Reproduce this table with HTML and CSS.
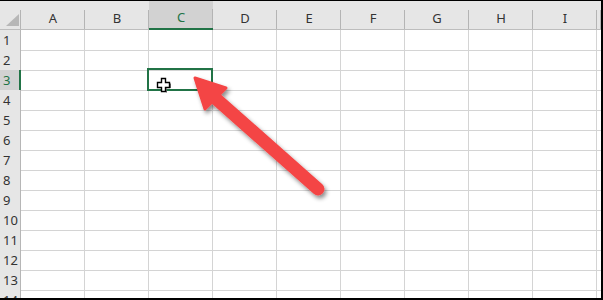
FILE: index.html
```html
<!DOCTYPE html>
<html lang="en">
<head>
    <meta charset="UTF-8">
    <title>Sheet1</title>
    <link rel="stylesheet" href="styles.css">
</head>
<body>
    <div class="sheet">
        <!-- column headers -->
        <div class="row head">
            <div class="corner"><span class="tri"></span></div>
            <div class="ch">A</div>
            <div class="ch">B</div>
            <div class="ch sel">C</div>
            <div class="ch">D</div>
            <div class="ch">E</div>
            <div class="ch">F</div>
            <div class="ch">G</div>
            <div class="ch">H</div>
            <div class="ch">I</div>
            <div class="ch"></div>
        </div>

        <div class="row"><div class="rh">1</div><div></div><div></div><div></div><div></div><div></div><div></div><div></div><div></div><div></div><div></div></div>
        <div class="row"><div class="rh">2</div><div></div><div></div><div></div><div></div><div></div><div></div><div></div><div></div><div></div><div></div></div>
        <div class="row"><div class="rh sel">3</div><div></div><div></div><div class="active"><span class="cursor"><svg width="16" height="17" viewBox="0 0 16 17"><path d="M5.5 1.5h4v4h4v5h-4v4h-4v-4h-4v-5h4z" fill="#fff" stroke="#000" stroke-width="1.4" stroke-linejoin="miter"/><path d="M10.5 11.5v4M14.5 6.5v4.5" stroke="#555" stroke-width="1"/></svg></span></div><div></div><div></div><div></div><div></div><div></div><div></div><div></div></div>
        <div class="row"><div class="rh">4</div><div></div><div></div><div></div><div></div><div></div><div></div><div></div><div></div><div></div><div></div></div>
        <div class="row"><div class="rh">5</div><div></div><div></div><div></div><div></div><div></div><div></div><div></div><div></div><div></div><div></div></div>
        <div class="row"><div class="rh">6</div><div></div><div></div><div></div><div></div><div></div><div></div><div></div><div></div><div></div><div></div></div>
        <div class="row"><div class="rh">7</div><div></div><div></div><div></div><div></div><div></div><div></div><div></div><div></div><div></div><div></div></div>
        <div class="row"><div class="rh">8</div><div></div><div></div><div></div><div></div><div></div><div></div><div></div><div></div><div></div><div></div></div>
        <div class="row"><div class="rh">9</div><div></div><div></div><div></div><div></div><div></div><div></div><div></div><div></div><div></div><div></div></div>
        <div class="row"><div class="rh">10</div><div></div><div></div><div></div><div></div><div></div><div></div><div></div><div></div><div></div><div></div></div>
        <div class="row"><div class="rh">11</div><div></div><div></div><div></div><div></div><div></div><div></div><div></div><div></div><div></div><div></div></div>
        <div class="row"><div class="rh">12</div><div></div><div></div><div></div><div></div><div></div><div></div><div></div><div></div><div></div><div></div></div>
        <div class="row"><div class="rh">13</div><div></div><div></div><div></div><div></div><div></div><div></div><div></div><div></div><div></div><div></div></div>
        <div class="row"><div class="rh">14</div><div></div><div></div><div></div><div></div><div></div><div></div><div></div><div></div><div></div><div></div></div>

        <!-- red callout arrow pointing at the active cell -->
        <svg class="arrow" width="603" height="300" viewBox="0 0 603 300">
            <defs>
                <filter id="shadow" x="-20%" y="-20%" width="140%" height="140%">
                    <feDropShadow dx="2" dy="3" stdDeviation="2" flood-color="#000" flood-opacity="0.45"/>
                </filter>
            </defs>
            <g filter="url(#shadow)" fill="#f44545" stroke="#f44545">
                <line x1="318" y1="189" x2="214" y2="97" stroke-width="13" stroke-linecap="round"/>
                <path d="M195 78 L226 88 L205 109 Z" stroke-width="3" stroke-linejoin="round"/>
            </g>
        </svg>
    </div>
</body>
</html>
```

FILE: styles.css
```css
body {
    margin: 0;
    background-color: #fff;
    font-family: "Noto Sans", "Open Sans", sans-serif;
}

.sheet {
    position: relative;
    width: 603px;
    height: 300px;
    box-sizing: border-box;
    border-top: 1px solid #000;
    border-right: 2px solid #000;
    border-bottom: 2px solid #000;
    overflow: hidden;
}

.row {
    display: grid;
    grid-template-columns: 21px repeat(9, 64px) 1fr;
    height: 20px;
}

.row > div {
    box-sizing: border-box;
    border-right: 1px solid #d4d4d4;
    border-bottom: 1px solid #d4d4d4;
}

.row > div:last-child {
    border-right: none;
}

/* column header strip */
.row.head {
    height: 29px;
}

.row.head > div {
    border-right: none;
    border-bottom: 1px solid #bdbdbd;
    background: linear-gradient(#b4b4b4, #b4b4b4) right bottom / 1px 19px no-repeat, #e6e6e6;
}

.corner {
    position: relative;
}

.corner .tri {
    position: absolute;
    left: 6px;
    top: 13px;
    width: 0;
    height: 0;
    border-left: 13px solid transparent;
    border-bottom: 12px solid #b7b7b7;
}

.ch {
    display: flex;
    align-items: flex-end;
    justify-content: center;
    padding-bottom: 3px;
    font-size: 13px;
    line-height: 16px;
    color: #333;
}

.row.head > .ch.sel {
    background-color: #d2d2d2;
    border-bottom: 2px solid #217346;
    color: #217346;
}

/* row numbers */
.row > .rh {
    background-color: #e6e6e6;
    border-right: 1px solid #b6b6b6;
    border-bottom: 1px solid #c4c4c4;
    padding-left: 3px;
    font-size: 13px;
    line-height: 20px;
    color: #333;
}

.row > .rh.sel {
    background-color: #d2d2d2;
    border-right: 2px solid #217346;
    color: #217346;
}

/* selected cell */
.active {
    position: relative;
}

.active::after {
    content: "";
    position: absolute;
    top: -2px;
    left: -2px;
    right: -1px;
    bottom: -1px;
    border: 2px solid #217346;
}

.cursor {
    position: absolute;
    left: 7px;
    top: 7px;
    z-index: 1;
    line-height: 0;
}

.arrow {
    position: absolute;
    top: -1px;
    left: 0;
    pointer-events: none;
}
```
